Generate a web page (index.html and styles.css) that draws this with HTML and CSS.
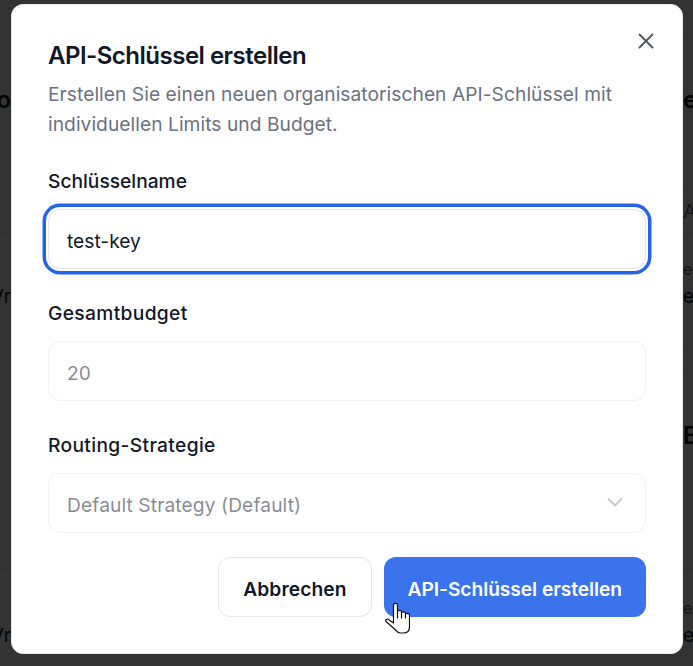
FILE: index.html
```html
<!DOCTYPE html>
<html lang="de">
<head>
    <meta charset="UTF-8">
    <title>API-Schlüssel erstellen</title>
    <link rel="stylesheet" href="styles.css">
</head>
<body>
<div class="page">
    <div class="bg-row row-top"></div>
    <div class="bg-row row-head">
        <div class="bg-left"><b>o</b></div>
        <div class="bg-right"><b>e</b></div>
    </div>
    <div class="bg-row row-thin">
        <div class="bg-left"></div>
        <div class="bg-right dim">A</div>
    </div>
    <div class="bg-row row-item">
        <div class="bg-left"><span class="left-text">Vr</span></div>
        <div class="bg-right"><small class="dim">e</small><span>er</span></div>
    </div>
    <div class="bg-row row-gap"></div>
    <div class="bg-row row-section">
        <div class="bg-left"></div>
        <div class="bg-right"><b>B</b></div>
    </div>
    <div class="bg-row row-item last">
        <div class="bg-left"><span class="left-text">Vr</span></div>
        <div class="bg-right"><small class="dim">e</small><span>er</span></div>
    </div>
</div>

<div class="overlay">
    <div class="modal">
        <button class="close-btn" aria-label="Schließen">
            <svg width="16" height="16" viewBox="0 0 16 16" fill="none" stroke="currentColor" stroke-width="1.8" stroke-linecap="round">
                <path d="M1.500 1.500l13 13M14.500 1.500l-13 13"/>
            </svg>
        </button>

        <h2>API-Schlüssel erstellen</h2>
        <p class="subtitle">Erstellen Sie einen neuen organisatorischen API-Schlüssel mit individuellen Limits und Budget.</p>

        <div class="field">
            <label for="keyName">Schlüsselname</label>
            <input id="keyName" class="input focused" type="text" value="test-key">
        </div>

        <div class="field">
            <label class="label-wide" for="budget">Gesamtbudget</label>
            <input id="budget" class="input" type="text" value="20" disabled>
        </div>

        <div class="field">
            <label class="label-wide">Routing-Strategie</label>
            <div class="input select">
                <span>Default Strategy (Default)</span>
                <svg width="16" height="16" viewBox="0 0 16 16" fill="none" stroke="currentColor" stroke-width="1.8" stroke-linecap="round" stroke-linejoin="round">
                    <path d="M1.500 4l6.500 6.500L14.500 4"/>
                </svg>
            </div>
        </div>

        <div class="actions">
            <button class="btn btn-cancel">Abbrechen</button>
            <button class="btn btn-primary">API-Schlüssel erstellen</button>
            <svg class="cursor" width="25" height="32" viewBox="0 0 25 32" fill="#fff" stroke="#111" stroke-width="1.200" stroke-linejoin="round" stroke-linecap="round">
                <path d="M8.500 3C8.500 .8 12.500 .8 12.500 3V9.500c0-1.500 4-1.500 4 0V11c0-1.500 4-1.500 4 0v1.500c0-1.500 4-1.500 4 0V25c0 4-2 6-6 6h-3c-3 0-4-2-6-4L1 19.500c-1.200-1.500.8-3 2.500-2L8.500 21Z"/>
                <path d="M12.500 9.500V16M16.500 11V16M20.500 12.500V16" fill="none"/>
            </svg>
        </div>
    </div>
</div>
</body>
</html>
```

FILE: styles.css
```css
* {
    box-sizing: border-box;
}

html, body {
    height: 100%;
    margin: 0;
}

body {
    font-family: Inter, "Noto Sans", sans-serif;
    background: #fff;
    color: #111827;
    overflow: hidden;
}

/* page behind the dialog, only its edges show */
.page {
    height: 100%;
    overflow: hidden;
    font-size: 19px;
    line-height: 28px;
}

.bg-row {
    display: flex;
    justify-content: space-between;
    border-bottom: 1px solid #e5e7eb;
}

.row-top { height: 34px; }
.row-head { height: 157px; padding-top: 52px; }
.row-thin { height: 42px; padding-top: 7px; }
.row-item { height: 114px; padding-top: 22px; }
.row-gap { height: 25px; }
.row-section { height: 197px; padding-top: 50px; }
.row-item.last { height: 98px; border-bottom: 0; padding-top: 25px; }

.bg-left,
.bg-right {
    width: 11px;
    white-space: nowrap;
}

.bg-left {
    display: flex;
    flex-direction: column;
    align-items: flex-end;
}

.bg-right {
    width: 10px;
    display: flex;
    flex-direction: column;
    margin-left: auto;
}

.bg-left b,
.bg-right b {
    font-size: 24px;
    font-weight: 600;
}

.left-text {
    margin-top: 28px;
}

.dim {
    color: #6b7280;
}

.bg-right small {
    font-size: 16px;
}

.overlay {
    position: fixed;
    inset: 0;
    background: rgba(0, 0, 0, 0.8);
    backdrop-filter: blur(0.5px);
}

.modal {
    position: absolute;
    left: 11px;
    top: 4px;
    width: 672px;
    height: 650px;
    padding: 36px;
    background: #fff;
    border: 1px solid #e5e7eb;
    border-radius: 12px;
}

.close-btn {
    position: absolute;
    top: 28px;
    right: 28px;
    padding: 0;
    display: flex;
    background: none;
    border: 0;
    color: #4b5563;
}

h2 {
    margin: 0 0 8px;
    font-size: 24px;
    line-height: 30px;
    font-weight: 600;
    letter-spacing: -0.5px;
}

.subtitle {
    margin: 0 0 28px;
    font-size: 19.2px;
    line-height: 30px;
    letter-spacing: 0.05px;
    color: #6b7280;
}

.field + .field {
    margin-top: 30px;
}

label {
    display: block;
    margin-bottom: 14px;
    font-size: 19.2px;
    line-height: 28px;
    font-weight: 500;
}

.label-wide {
    letter-spacing: 0.35px;
}

.input {
    display: block;
    width: 100%;
    height: 60px;
    padding: 3px 18px 0;
    font: inherit;
    font-size: 19.2px;
    color: #111827;
    background: #fff;
    border: 1px solid #e5e7eb;
    border-radius: 12px;
    outline: none;
}

.input.focused {
    box-shadow: 0 0 0 2px #fff, 0 0 0 5.500px #2563eb;
}

.input:disabled {
    opacity: 0.5;
}

.select {
    display: flex;
    align-items: center;
    justify-content: space-between;
    padding-right: 22px;
    letter-spacing: 0.1px;
    opacity: 0.5;
}

.select svg {
    margin-top: -3px;
    color: #8f9299;
}

.actions {
    position: relative;
    display: flex;
    justify-content: flex-end;
    gap: 12px;
    margin-top: 24px;
}

.btn {
    height: 60px;
    padding: 3px 24px 0;
    font: inherit;
    font-size: 19.2px;
    font-weight: 600;
    border-radius: 12px;
}

.btn-cancel {
    background: #fff;
    color: #111827;
    border: 1px solid #e5e7eb;
    letter-spacing: 0.1px;
}

.btn-primary {
    background: #3b73ed;
    color: #fff;
    border: 0;
    letter-spacing: -0.05px;
}

/* mouse pointer caught in the screenshot */
.cursor {
    position: absolute;
    left: 337px;
    top: 45px;
}
```
